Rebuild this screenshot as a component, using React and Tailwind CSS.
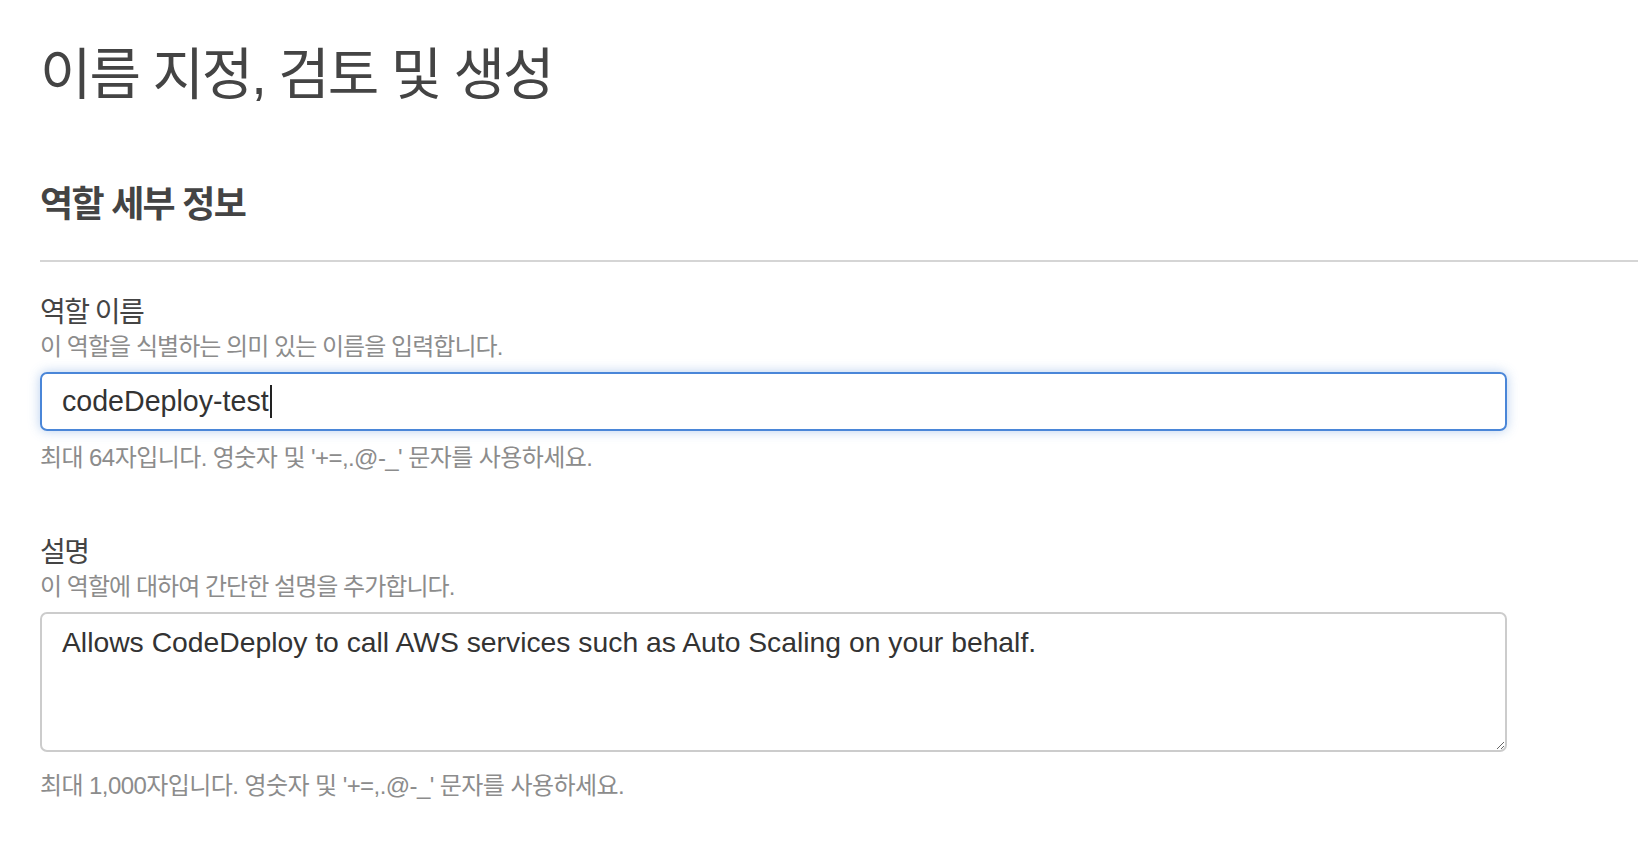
import React from "react";

const font = "font-['Liberation_Sans','Noto_Sans_CJK_KR',sans-serif]";

function Field({ label, help, hint, children }) {
  return (
    <div className="w-[1467px]">
      <div className="text-[28px] leading-[34px] tracking-[-0.055em] text-[#444]">{label}</div>
      <div className="mt-[2px] text-[24px] leading-[30px] tracking-[-0.04em] text-[#8c8c8c]">{help}</div>
      {children}
      <div className="text-[24px] leading-[30px] tracking-[-0.024em] text-[#8c8c8c]">{hint}</div>
    </div>
  );
}

export default function App() {
  return (
    <div className={`min-h-screen bg-white pl-10 ${font}`}>
      <h1 className="pt-[41px] text-[56px] leading-[67px] tracking-[-0.037em] text-[#444]">
        이름 지정, 검토 및 생성
      </h1>

      <h2 className="mt-[75px] text-[36px] font-bold leading-[44px] tracking-[-0.047em] text-[#444]">
        역할 세부 정보
      </h2>

      <div className="mt-[33px] h-[2px] bg-[#d5d5d5]" />

      <div className="mt-[34px]">
        <Field
          label="역할 이름"
          help="이 역할을 식별하는 의미 있는 이름을 입력합니다."
          hint="최대 64자입니다. 영숫자 및 '+=,.@-_' 문자를 사용하세요."
        >
          <div className="mt-[10px] mb-[12px] flex h-[59px] items-center rounded-[7px] border-2 border-[#4a86d8] px-5 shadow-[0_0_12px_rgba(74,134,216,0.4)]">
            <span className="text-[28.6px] text-[#333]">codeDeploy-test</span>
            <span className="ml-[1px] h-[33px] w-[2px] bg-[#222]" />
          </div>
        </Field>
      </div>

      <div className="mt-[63px]">
        <Field
          label="설명"
          help="이 역할에 대하여 간단한 설명을 추가합니다."
          hint="최대 1,000자입니다. 영숫자 및 '+=,.@-_' 문자를 사용하세요."
        >
          <textarea
            readOnly
            value="Allows CodeDeploy to call AWS services such as Auto Scaling on your behalf."
            className="mt-[10px] mb-[19px] block h-[140px] w-full resize-y rounded-[7px] border-2 border-[#ccc] px-5 py-[8px] text-[28.3px] leading-[40px] text-[#333] outline-none"
          />
        </Field>
      </div>
    </div>
  );
}
